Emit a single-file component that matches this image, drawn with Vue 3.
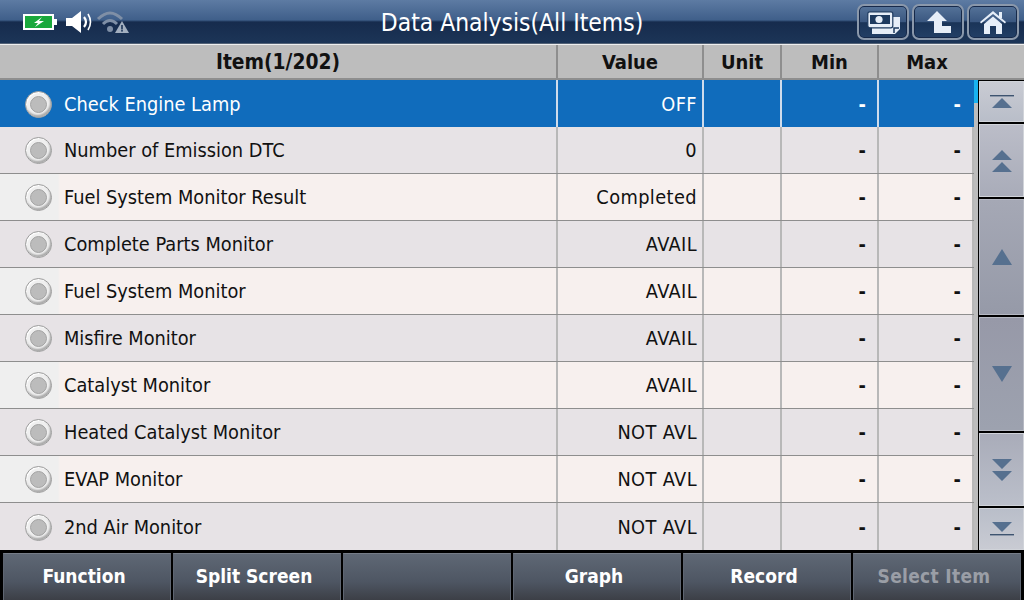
<template>
  <div class="app">
    <div class="topbar">
      <div class="status">
        <svg class="battery" width="36" height="18" viewBox="0 0 36 18">
          <rect x="1" y="2" width="29" height="14" fill="#1aa83c" stroke="#fff" stroke-width="2" />
          <rect x="31" y="6" width="3" height="6" fill="#fff" />
          <path d="M19 4 L11 10 L15 10 L12 14 L21 8 L16 8 Z" fill="#fff" />
        </svg>
        <svg class="speaker" width="28" height="24" viewBox="0 0 28 24">
          <path d="M1 8 H7 L16 1 V23 L7 16 H1 Z" fill="#fff" />
          <path d="M19 7 Q23 12 19 17" fill="none" stroke="#fff" stroke-width="2.2" />
          <path d="M23 4 Q28 12 23 20" fill="none" stroke="#fff" stroke-width="1.6" />
        </svg>
        <svg class="wifi" width="34" height="24" viewBox="0 0 34 24">
          <path d="M2 9 Q14 -3 26 9" fill="none" stroke="#7f8fa6" stroke-width="3" />
          <path d="M7 14 Q14 7 21 14" fill="none" stroke="#7f8fa6" stroke-width="3" />
          <circle cx="14" cy="19" r="3" fill="#7f8fa6" />
          <path d="M26 11 L33 23 H19 Z" fill="#a3afbf" />
          <rect x="25.2" y="15" width="1.6" height="4.5" fill="#1c3557" />
          <rect x="25.2" y="20" width="1.6" height="1.6" fill="#1c3557" />
        </svg>
      </div>
      <div class="title">Data Analysis(All Items)</div>
      <div class="top-actions">
        <button class="top-btn">
          <svg width="33" height="23" viewBox="0 0 33 23">
            <path d="M5 6 H33 V18 L28 23 H5 Z" fill="#e6eef8" />
            <path d="M27 22 V17 H32" fill="none" stroke="#1d3a5f" stroke-width="1.5" />
            <rect x="0.8" y="0.8" width="25" height="16" rx="2" fill="#e6eef8" stroke="#1d3a5f" stroke-width="1.2" />
            <rect x="3" y="4" width="20" height="9" fill="#1d3a5f" />
            <circle cx="12" cy="8.5" r="3.6" fill="#e6eef8" />
          </svg>
        </button>
        <button class="top-btn">
          <svg width="25" height="22" viewBox="0 0 25 22">
            <path d="M11 0 L21 10 H16 V15 H25 V22 H8 V10 H1 Z" fill="#e6eef8" />
          </svg>
        </button>
        <button class="top-btn">
          <svg width="26" height="23" viewBox="0 0 26 23">
            <path d="M13 0 L26 11 L25 12.5 L13 3 L1 12.5 L0 11 Z" fill="#e6eef8" />
            <path d="M4 13 L13 5.5 L22 13 V23 H16 V15 H10 V23 H4 Z" fill="#e6eef8" />
            <rect x="19" y="1" width="3" height="6" fill="#e6eef8" />
          </svg>
        </button>
      </div>
    </div>

    <div class="row head">
      <div class="cell">Item(1/202)</div>
      <div class="cell">Value</div>
      <div class="cell">Unit</div>
      <div class="cell">Min</div>
      <div class="cell">Max</div>
      <div class="cell"></div>
    </div>

    <div class="middle">
      <div class="table">
        <div
          v-for="(row, i) in rows"
          :key="row.name"
          class="row"
          :class="{ selected: i === 0, light: i % 2 === 0, dark: i % 2 === 1 }"
        >
          <div class="cell name">
            <span class="led"><span class="led-inner"></span></span>
            <span class="label">{{ row.name }}</span>
          </div>
          <div class="cell right value">{{ row.value }}</div>
          <div class="cell right"></div>
          <div class="cell right dash">-</div>
          <div class="cell right dash">-</div>
        </div>
      </div>

      <div class="rail">
        <div class="thumb"></div>
        <div class="scroll">
          <button class="sbtn first">
            <svg width="24" height="16" viewBox="0 0 24 16"><rect y="1" width="24" height="1.4" fill="#3e5470" /><path d="M12 4 L22 14 H2 Z" fill="#56708f" /></svg>
          </button>
          <button class="sbtn second">
            <svg width="20" height="24" viewBox="0 0 20 24"><path d="M10 1 L20 11 H0 Z M10 13 L20 23 H0 Z" fill="#56708f" /></svg>
          </button>
          <button class="sbtn third">
            <svg width="20" height="16" viewBox="0 0 20 16"><path d="M10 0 L20 16 H0 Z" fill="#56708f" /></svg>
          </button>
          <button class="sbtn fourth">
            <svg width="20" height="16" viewBox="0 0 20 16"><path d="M0 0 H20 L10 16 Z" fill="#56708f" /></svg>
          </button>
          <button class="sbtn fifth">
            <svg width="20" height="24" viewBox="0 0 20 24"><path d="M0 1 H20 L10 11 Z M0 13 H20 L10 23 Z" fill="#56708f" /></svg>
          </button>
          <button class="sbtn sixth">
            <svg width="24" height="16" viewBox="0 0 24 16"><path d="M2 1 H22 L12 11 Z" fill="#56708f" /><rect y="13" width="24" height="1.4" fill="#3e5470" /></svg>
          </button>
        </div>
      </div>
    </div>

    <div class="bottom">
      <button v-for="b in buttons" :key="b.id" class="bbtn" :class="{ off: b.off }">{{ b.text }}</button>
    </div>
  </div>
</template>

<script setup>
const rows = [
  { name: 'Check Engine Lamp', value: 'OFF' },
  { name: 'Number of Emission DTC', value: '0' },
  { name: 'Fuel System Monitor Result', value: 'Completed' },
  { name: 'Complete Parts Monitor', value: 'AVAIL' },
  { name: 'Fuel System Monitor', value: 'AVAIL' },
  { name: 'Misfire Monitor', value: 'AVAIL' },
  { name: 'Catalyst Monitor', value: 'AVAIL' },
  { name: 'Heated Catalyst Monitor', value: 'NOT AVL' },
  { name: 'EVAP Monitor', value: 'NOT AVL' },
  { name: '2nd Air Monitor', value: 'NOT AVL' }
]

const buttons = [
  { id: 1, text: 'Function' },
  { id: 2, text: 'Split Screen' },
  { id: 3, text: '' },
  { id: 4, text: 'Graph' },
  { id: 5, text: 'Record' },
  { id: 6, text: 'Select Item', off: true }
]
</script>

<style>
html, body { margin: 0; padding: 0; background: #000; }
</style>

<style scoped>
* { box-sizing: border-box; }
.app { width: 1024px; height: 600px; overflow: hidden; display: flex; flex-direction: column; font-family: "DejaVu Sans", sans-serif; font-stretch: condensed; background: #bdbdbd; }

.topbar { height: 44px; flex: none; display: flex; align-items: center; background: linear-gradient(#5d7ba3 0, #3f5f8a 20px, #162b4d 22px, #1c3557 43px, #8a8f96 44px); }
.status { width: 256px; display: flex; align-items: center; padding-left: 23px; gap: 2px; }
.speaker { margin-left: 4px; }
.wifi { margin-left: 1px; }
.title { width: 504px; text-align: center; color: #fff; font-size: 24.4px; padding-left: 8px; }
.top-actions { flex: 1; display: flex; justify-content: flex-end; gap: 3px; padding-right: 5px; }
.top-btn { width: 52px; height: 36px; padding: 0; display: flex; align-items: center; justify-content: center; border: 2px solid #8a98ab; border-radius: 7px; background: linear-gradient(#557399 0, #3a5780 50%, #1a3458 52%, #223f66 100%); box-shadow: inset 0 0 0 1px #16294a; }

.middle { height: 470px; flex: none; display: flex; }
.table { width: 974px; }
.row { display: grid; grid-template-columns: 558px 146px 78px 97px 95px; height: 47px; border-bottom: 1px solid #8e8e8e; }
.row.head { grid-template-columns: 558px 146px 78px 97px 96px 1fr; height: 36px; flex: none; background: #bdbdbd; border-top: 1px solid #eee; border-bottom: 2px solid #8e8e8e; }
.cell { display: flex; align-items: center; border-right: 2px solid #b8b8b8; font-size: 19.8px; color: #111; padding-top: 1px; }
.head .cell { justify-content: center; border-right-color: #8e8e8e; font-size: 20px; font-weight: bold; }
.head .cell:first-child { font-size: 20.8px; }
.head .cell:nth-child(n+5) { border-right: none; }
.right { justify-content: flex-end; padding-right: 5px; }
.value { letter-spacing: 0.4px; }
.dash { padding-right: 11px; font-weight: bold; }
.row:last-child { border-bottom: none; }
.name { padding-left: 25px; }
.led { width: 27px; height: 27px; border-radius: 50%; display: flex; align-items: center; justify-content: center; background: #efefef; border: 1px solid #9c9c9c; box-shadow: inset -1px -2px 2px #a8a8a8, inset 1px 1px 1px #fff; flex: none; }
.led-inner { width: 17px; height: 17px; border-radius: 50%; background: #bcbcbc; border: 1px solid #a2a2a2; box-shadow: 0 0 1px #fff; }
.label { margin-left: 12px; }
.light { background: #f7f0ee; }
.dark { background: #e7e3e6; }
.light .name { background: linear-gradient(90deg, #efefef 58px, #f7f0ee 60px); }
.selected, .selected .name { background: #106cbc; border-bottom: none; }
.selected .cell { color: #fff; border-right-color: #cfdcec; }
.selected .cell:last-child { border-right: none; padding-right: 13px; }

.rail { position: relative; width: 50px; background: #bdbdbd; display: flex; }
.thumb { position: absolute; left: 0; top: 0; width: 4px; height: 23px; background: #19b2f0; }
.scroll { flex: 1; margin-left: 4px; background: #000; display: flex; flex-direction: column; gap: 2px; padding-left: 1px; padding-top: 1px; }
.sbtn { width: 45px; padding: 0; border: 1px solid #d0d3d9; display: flex; align-items: center; justify-content: center; }
.first { height: 41px; background: linear-gradient(#c9cbd3, #b9bec9); }
.second { height: 73px; background: linear-gradient(#bbbdc8, #a9acb9); }
.third { height: 116px; background: linear-gradient(#a5a8b5, #969aa8); border-color: #b5b8c2; }
.fourth { height: 114px; background: linear-gradient(#9799a8, #9da2af); border-color: #b5b8c2; }
.fifth { height: 73px; background: linear-gradient(#a9acb9, #bbbfca); }
.sixth { height: 42px; background: linear-gradient(#b9bec9, #c9cbd3); }

.bottom { height: 50px; flex: none; background: #000; display: flex; gap: 2px; padding: 3px 3px 0; }
.bbtn { flex: 1; padding: 0 6px 2px 0; border: none; border-top: 1px solid #767d88; border-left: 1px solid #5f6672; border-right: 1px solid #5f6672; background: linear-gradient(#5f6875, #4e5663 60%, #3c3f46 100%); color: #fff; font-family: "DejaVu Sans", sans-serif; font-stretch: condensed; font-size: 19px; font-weight: bold; }
.off { color: #9a9ea6; letter-spacing: 0.3px; }
</style>
